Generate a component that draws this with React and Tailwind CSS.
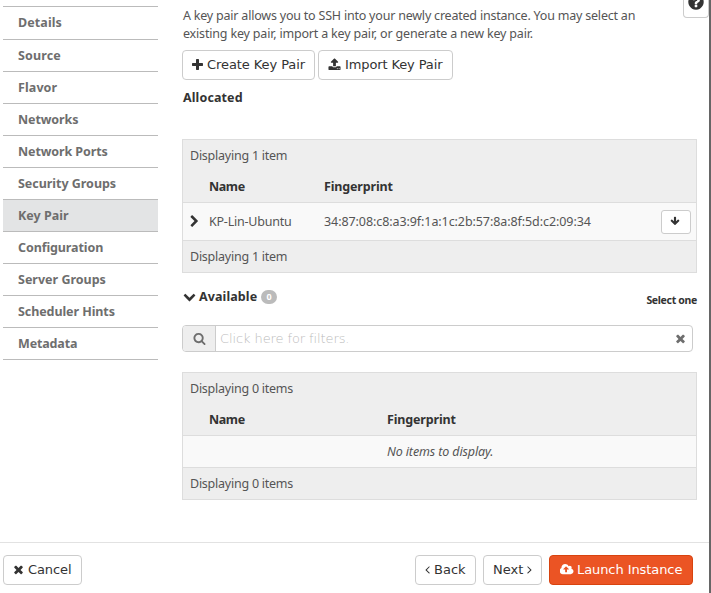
import React from "react";

const ICONS = {
  plus: "M1600 736v192q0 40-28 68t-68 28h-416v416q0 40-28 68t-68 28h-192q-40 0-68-28t-28-68v-416h-416q-40 0-68-28t-28-68v-192q0-40 28-68t68-28h416v-416q0-40 28-68t68-28h192q40 0 68 28t28 68v416h416q40 0 68 28t28 68z",
  times: "M1490 1322q0 40-28 68l-136 136q-28 28-68 28t-68-28l-294-294-294 294q-28 28-68 28t-68-28l-136-136q-28-28-28-68t28-68l294-294-294-294q-28-28-28-68t28-68l136-136q28-28 68-28t68 28l294 294 294-294q28-28 68-28t68 28l136 136q28 28 28 68t-28 68l-294 294 294 294q28 28 28 68z",
  upload: "M1344 1472q0-26-19-45t-45-19-45 19-19 45 19 45 45 19 45-19 19-45zm256 0q0-26-19-45t-45-19-45 19-19 45 19 45 45 19 45-19 19-45zm128-224v320q0 40-28 68t-68 28h-1472q-40 0-68-28t-28-68v-320q0-40 28-68t68-28h427q21 56 70.5 92t110.5 36h256q61 0 110.5-36t70.5-92h427q40 0 68 28t28 68zm-325-648q-17 40-59 40h-256v448q0 26-19 45t-45 19h-256q-26 0-45-19t-19-45v-448h-256q-42 0-59-40-17-39 14-69l448-448q18-19 45-19t45 19l448 448q31 30 14 69z",
  search: "M1216 832q0-185-131.5-316.5t-316.5-131.5-316.5 131.5-131.5 316.5 131.5 316.5 316.5 131.5 316.5-131.5 131.5-316.5zm512 832q0 52-38 90t-90 38q-54 0-90-38l-343-342q-179 124-399 124-143 0-273.5-55.5t-225-150-150-225-55.5-273.5 55.5-273.5 150-225 225-150 273.5-55.5 273.5 55.5 225 150 150 225 55.5 273.5q0 220-124 399l343 343q37 37 37 90z",
  chevronRight: "M1363 877l-742 742q-19 19-45 19t-45-19l-166-166q-19-19-19-45t19-45l531-531-531-531q-19-19-19-45t19-45l166-166q19-19 45-19t45 19l742 742q19 19 19 45t-19 45z",
  chevronDown: "M1683 808l-742 741q-19 19-45 19t-45-19l-742-741q-19-19-19-45.5t19-45.5l166-165q19-19 45-19t45 19l531 531 531-531q19-19 45-19t45 19l166 165q19 19 19 45.5t-19 45.5z",
  arrowDown: "M1675 832q0 53-37 90l-651 652q-39 37-91 37-53 0-90-37l-651-652q-38-36-38-90 0-53 38-91l74-75q39-37 91-37 53 0 90 37l294 294v-704q0-52 38-90t90-38h128q52 0 90 38t38 90v704l294-294q37-37 90-37 52 0 91 37l75 75q37 39 37 91z",
  cloud: "M1216 864q0-14-9-23l-352-352q-9-9-23-9t-23 9l-351 351q-10 12-10 24 0 14 9 23t23 9h224v352q0 13 9.5 22.5t22.5 9.5h192q13 0 22.5-9.5t9.5-22.5v-352h224q13 0 22.5-9.5t9.5-22.5zm640 288q0 159-112.5 271.5t-271.5 112.5h-1088q-185 0-316.5-131.5t-131.5-316.5q0-130 70-240t188-165q-2-30-2-43 0-212 150-362t362-150q156 0 285.5 87t188.5 231q71-62 166-62 106 0 181 75t75 181q0 76-41 138 130 31 213.5 135.5t83.5 238.5z",
  angleLeft: "M1203 544q0 13-10 23l-393 393 393 393q10 10 10 23t-10 23l-50 50q-10 10-23 10t-23-10l-466-466q-10-10-10-23t10-23l466-466q10-10 23-10t23 10l50 50q10 10 10 23z",
  angleRight: "M1171 960q0 13-10 23l-466 466q-10 10-23 10t-23-10l-50-50q-10-10-10-23t10-23l393-393-393-393q-10-10-10-23t10-23l50-50q10-10 23-10t23 10l466 466q10 10 10 23z",
  question: "M1024 1376v-192q0-14-9-23t-23-9h-192q-14 0-23 9t-9 23v192q0 14 9 23t23 9h192q14 0 23-9t9-23zm256-672q0-88-55.5-163t-138.5-116-170-41q-243 0-371 213-15 24 8 42l132 100q7 6 19 6 16 0 25-12 53-68 86-92 34-24 86-24 48 0 85.5 26t37.5 59q0 38-20 61t-68 45q-63 28-115.5 86.5t-52.5 125.5v36q0 14 9 23t23 9h192q14 0 23-9t9-23q0-19 21.5-49.5t54.5-49.5q32-18 49-28.5t46-35 44.5-48 28-60.5 12.5-81zm384 192q0 209-103 385.5t-279.5 279.5-385.5 103-385.5-103-279.5-279.5-103-385.5 103-385.5 279.5-279.5 385.5-103 385.5 103 279.5 279.5 103 385.5z",
};

function Icon({ name, box = "0 0 1792 1792", className = "" }) {
  return (
    <svg viewBox={box} fill="currentColor" className={`shrink-0 ${className}`} aria-hidden="true">
      <path d={ICONS[name]} />
    </svg>
  );
}

function Button({ className = "", children }) {
  return (
    <button
      className={`flex h-[30px] shrink-0 items-center rounded-[4px] border font-['DejaVu_Sans',sans-serif] text-[13px] leading-[18px] whitespace-nowrap ${className}`}
    >
      {children}
    </button>
  );
}

const STEPS = [
  ["Details", "tracking-[0.1px]"],
  ["Source", "tracking-[0.15px]"],
  ["Flavor", "tracking-[0.1px]"],
  ["Networks", "tracking-[-0.1px]"],
  ["Network Ports", "tracking-[-0.1px]"],
  ["Security Groups", "tracking-[-0.03px]"],
  ["Key Pair", "tracking-[0px]"],
  ["Configuration", "tracking-[-0.1px]"],
  ["Server Groups", "tracking-[0px]"],
  ["Scheduler Hints", "tracking-[-0.08px]"],
  ["Metadata", "tracking-[-0.15px]"],
];

function Sidebar() {
  return (
    <nav className="mt-[6px] ml-[3px] w-[155px] shrink-0 border-t border-[#bbb]">
      {STEPS.map(([label, tracking], i) => (
        <div
          key={label}
          className={`flex items-center border-b border-[#bbb] pl-[15px] font-bold text-[#6e6e6e] ${tracking} ${
            i === 0 ? "h-[33px]" : "h-8"
          } ${label === "Key Pair" ? "bg-[#e3e4e5]" : ""}`}
        >
          {label}
        </div>
      ))}
    </nav>
  );
}

function Table({ count, nameWidth, row }) {
  return (
    <section className="w-[515px] border border-[#ddd] bg-[#eee]">
      <div className="flex h-[31px] items-center pl-[7px] tracking-[-0.24px]">{count}</div>
      <div className="flex h-8 items-center border-b border-[#ddd] pl-[26px] font-bold tracking-[-0.15px] text-[#333]">
        <div className={`shrink-0 tracking-[-0.4px] ${nameWidth}`}>Name</div>
        <div>Fingerprint</div>
      </div>
      {row}
      <div className="flex h-[31px] items-center pl-[7px] tracking-[-0.24px]">{count}</div>
    </section>
  );
}

export default function App() {
  return (
    <div className="flex h-[593px] w-[711px] overflow-hidden bg-white font-['Noto_Sans',sans-serif] text-[12.5px] leading-[18px] text-[#555]">
      <div className="flex w-[709px] flex-col">
        <div className="flex h-[542px]">
          <Sidebar />
          <main className="ml-6 w-[515px] shrink-0">
            <p className="h-[43px] pt-[7px] pl-px whitespace-nowrap">
              <span className="tracking-[-0.21px]">
                A key pair allows you to SSH into your newly created instance. You may select an
              </span>
              <br />
              <span className="tracking-[-0.18px]">
                existing key pair, import a key pair, or generate a new key pair.
              </span>
            </p>
            <div className="mt-[7px] flex gap-[3px]">
              <Button className="w-[133px] border-[#ccc] pl-[9px] tracking-[-0.08px] text-[#333]">
                <Icon name="plus" box="192 0 1408 1792" className="mr-1 mb-px h-[14px] w-[11px]" />
                Create Key Pair
              </Button>
              <Button className="w-[135px] border-[#ccc] pl-[9px] tracking-[-0.12px] text-[#333]">
                <Icon name="upload" className="mr-1 mb-px size-[13px]" />
                Import Key Pair
              </Button>
            </div>
            <h2 className="mt-[9px] mb-8 pl-px font-bold tracking-[0.12px] text-[#333]">Allocated</h2>

            <Table
              count="Displaying 1 item"
              nameWidth="w-[115px]"
              row={
                <div className="flex h-[38px] items-center border-b border-[#ddd] bg-[#f9f9f9] pr-[5px] pl-[5px]">
                  <Icon name="chevronRight" className="mr-2 mb-px size-[13px] text-[#333]" />
                  <div className="w-[115px] shrink-0 tracking-[-0.22px]">KP-Lin-Ubuntu</div>
                  <div className="flex-1 tracking-[-0.08px]">34:87:08:c8:a3:9f:1a:1c:2b:57:8a:8f:5d:c2:09:34</div>
                  <button className="flex h-6 w-[30px] items-center justify-center rounded-[3px] border border-[#ccc] bg-white pr-[3px] pb-px text-[#333]">
                    <Icon name="arrowDown" className="size-[10px]" />
                  </button>
                </div>
              }
            />

            <div className="flex h-[52px] items-start justify-between pt-[15px] text-[#333]">
              <h2 className="flex items-center pl-px font-bold tracking-[0.1px]">
                <Icon name="chevronDown" className="mr-[3px] mb-0.5 size-[13px]" />
                Available
                <span className="ml-1 flex h-[14px] w-4 items-center justify-center rounded-full bg-[#bbb] text-[9px] text-white">
                  0
                </span>
              </h2>
              <span className="pt-[3px] text-[10.5px] font-bold tracking-[-0.32px]">Select one</span>
            </div>

            <div className="flex h-[27px] w-[511px] items-stretch overflow-hidden rounded-[4px] border border-[#ccc]">
              <div className="flex w-[33px] items-center justify-center border-r border-[#ccc] bg-[#eee] text-[#6e6e6e]">
                <Icon name="search" className="size-[13px]" />
              </div>
              <div className="flex flex-1 items-center justify-between pr-[5px] pl-1 font-['DejaVu_Sans',sans-serif] text-[13px] font-extralight tracking-[-0.1px] text-[#bbb]">
                Click here for filters.
                <Icon name="times" className="size-[13px] text-[#6e6e6e]" />
              </div>
            </div>

            <div className="mt-5">
              <Table
                count="Displaying 0 items"
                nameWidth="w-[178px]"
                row={
                  <div className="flex h-8 items-center border-b border-[#ddd] bg-[#f9f9f9] pl-[204px] tracking-[-0.12px] italic">
                    No items to display.
                  </div>
                }
              />
            </div>
          </main>
          <button className="-ml-[14px] flex h-[18px] w-[26px] shrink-0 items-end justify-center rounded-b-[4px] border border-t-0 border-[#ccc] pb-[6px] text-[#333]">
            <Icon name="question" className="size-[18px]" />
          </button>
        </div>
        <footer className="flex h-[51px] items-start border-t border-[#e2e2e2] pt-3 pr-4 pl-[3px] text-[#333]">
          <Button className="w-[79px] border-[#ccc] pl-2 tracking-[-0.1px]">
            <Icon name="times" className="mr-[3px] mb-px size-[13px]" />
            Cancel
          </Button>
          <div className="ml-auto flex gap-[7px]">
            <Button className="w-[61px] border-[#ccc] pl-[5px]">
              <Icon name="angleLeft" className="mb-px size-[13px]" />
              Back
            </Button>
            <Button className="w-[59px] border-[#ccc] pl-[9px]">
              Next
              <Icon name="angleRight" className="mb-px size-[13px]" />
            </Button>
            <Button className="w-[144px] border-[#d8430f] bg-[#eb5424] pl-[10px] tracking-[-0.08px] text-white">
              <Icon name="cloud" box="0 0 1920 1792" className="mr-[3px] mb-px h-[13px] w-[14px]" />
              Launch Instance
            </Button>
          </div>
        </footer>
      </div>
      <div className="w-0.5 shrink-0 bg-[#666]" />
    </div>
  );
}
